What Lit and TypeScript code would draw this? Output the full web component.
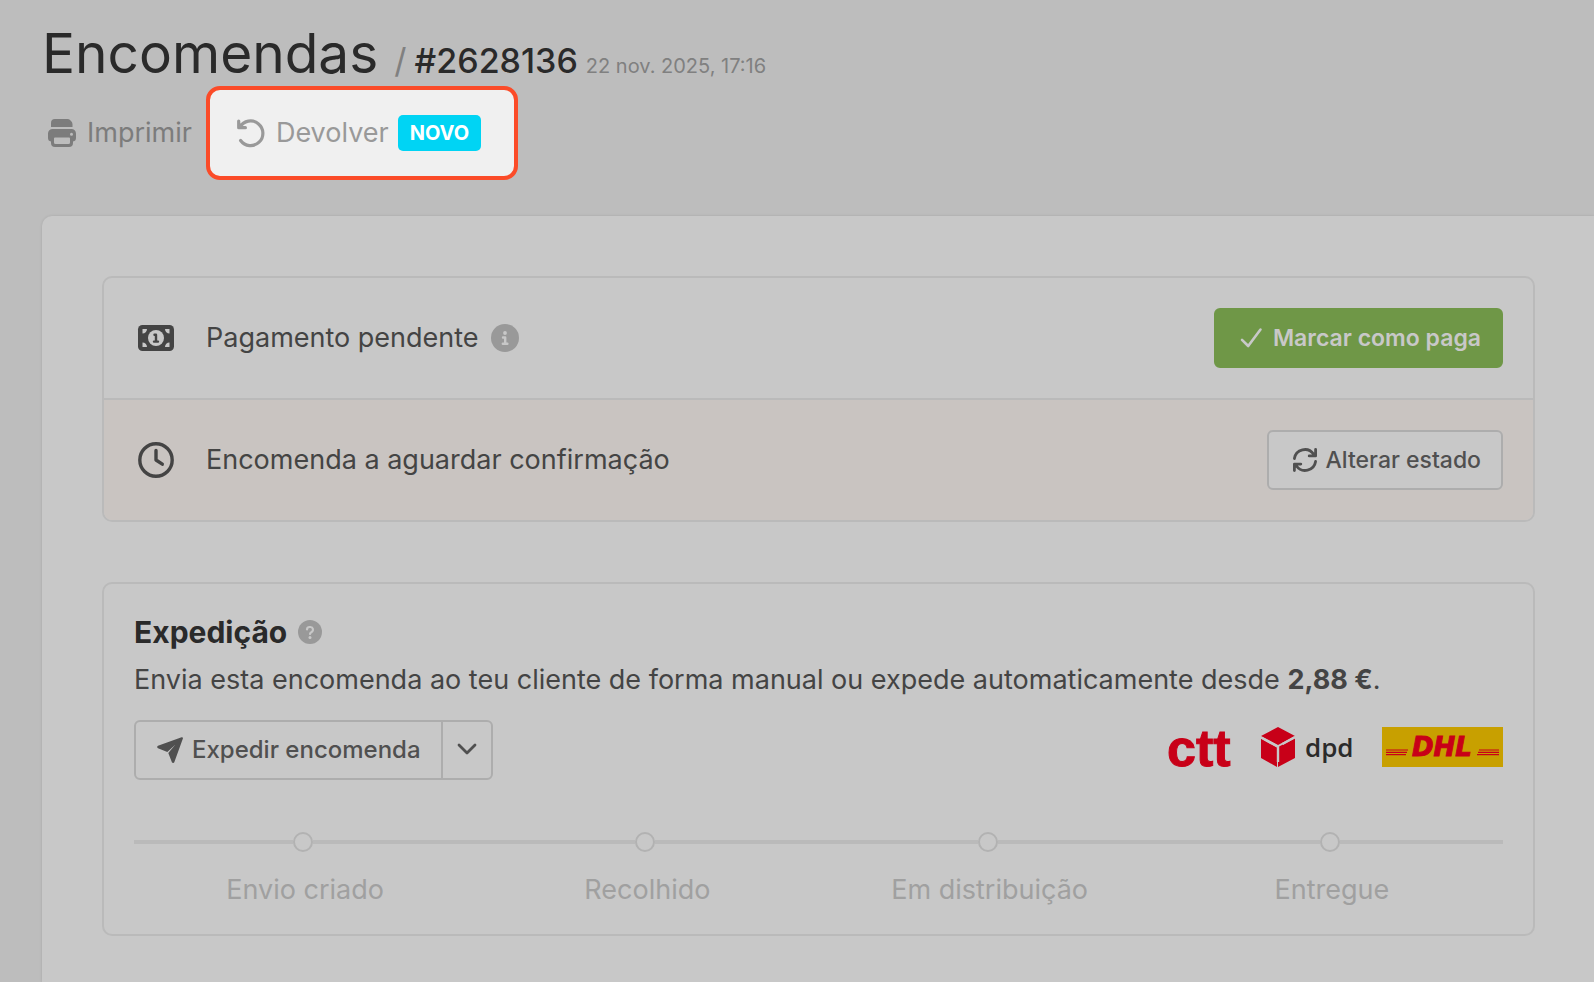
import { LitElement, html, css } from "lit";
import { customElement } from "lit/decorators.js";

const printer = html`<svg class="i28" viewBox="0 0 28 28" fill="currentColor" aria-hidden="true">
  <path d="M3 8V4a4 4 0 0 1 4-4h12.500a4 4 0 0 1 2.800 1.200l.700.800a5 5 0 0 1 1.500 3V8z"/>
  <path fill-rule="evenodd" d="M4.500 10h19A4.500 4.500 0 0 1 28 14.500V19a3.500 3.500 0 0 1-3 3.500V24a4 4 0 0 1-4 4H7a4 4 0 0 1-4-4v-1.500A3.500 3.500 0 0 1 0 19v-4.500A4.500 4.500 0 0 1 4.500 10zM6 19.500V23.500a1.500 1.500 0 0 0 1.500 1.500h13a1.500 1.500 0 0 0 1.500-1.500v-4a1 1 0 0 0-1-1H7a1 1 0 0 0-1 1zM23.500 13.800a1.500 1.500 0 1 0 0 3 1.500 1.500 0 0 0 0-3z"/>
</svg>`;

const undo = html`<svg class="i28" viewBox="0 0 28 28" fill="none" stroke="currentColor" stroke-width="3.200" stroke-linecap="round" stroke-linejoin="round" aria-hidden="true">
  <path d="M1.700 2v6.700h6.700M3 8A12.300 12.300 0 1 1 3.600 21.500"/><path d="M1.700 3.500v5.200h5.200z" fill="currentColor" stroke="none"/>
</svg>`;

const money = html`<svg class="i36" viewBox="0 0 36 36" aria-hidden="true">
  <rect x="0" y="5" width="36" height="26" rx="4.500" fill="currentColor"/>
  <g fill="#c8c8c8">
    <path d="M4.500 9h4.500a4.500 4.500 0 0 1-4.500 4.500zM31.500 9H27a4.500 4.500 0 0 0 4.500 4.500zM4.500 27h4.500a4.500 4.500 0 0 0-4.500-4.500zM31.500 27H27a4.500 4.500 0 0 1 4.500-4.500z"/>
    <circle cx="18" cy="18" r="8"/>
  </g>
  <path d="M16.500 14.800H18v6.600M16 21.600h4" fill="none" stroke="currentColor" stroke-width="2.400" stroke-linecap="round" stroke-linejoin="round"/>
</svg>`;

const clock = html`<svg class="i36" viewBox="0 0 36 36" fill="none" stroke="currentColor" stroke-width="3.400" stroke-linecap="round" stroke-linejoin="round" aria-hidden="true">
  <circle cx="18" cy="18" r="16.200"/><path d="M18 8.500V18l6.300 4.200"/>
</svg>`;

const info = html`<svg class="i28" viewBox="0 0 28 28" aria-hidden="true">
  <circle cx="14" cy="14" r="14" fill="#999"/>
  <circle cx="14" cy="9" r="1.900" fill="#c8c8c8"/>
  <path d="M12 13.500h2.200v6M11.800 19.700h4.600" fill="none" stroke="#c8c8c8" stroke-width="2.400" stroke-linecap="round" stroke-linejoin="round"/>
</svg>`;

const question = html`<svg class="i24" viewBox="0 0 24 24" aria-hidden="true">
  <circle cx="12" cy="12" r="12" fill="#999"/>
  <path d="M9 9.300a2.600 2.600 0 0 1 2.600-2.300h.800a2.700 2.700 0 0 1 1.300 5c-1 .600-1.700 1-1.700 2" fill="none" stroke="#c8c8c8" stroke-width="2.200" stroke-linecap="round"/>
  <circle cx="12" cy="17.400" r="1.500" fill="#c8c8c8"/>
</svg>`;

const check = html`<svg class="i24" viewBox="0 0 24 24" fill="none" stroke="currentColor" stroke-width="2.600" stroke-linecap="round" stroke-linejoin="round" aria-hidden="true">
  <path d="M2 13.800l6.200 6.200L20.500 3.500"/>
</svg>`;

const refresh = html`<svg class="i24" viewBox="0 0 24 24" fill="none" stroke="currentColor" stroke-width="2.800" stroke-linecap="round" stroke-linejoin="round" aria-hidden="true">
  <path d="M1.400 10.500A10.600 10.600 0 0 1 20.500 6l1.500 1.700M22.600 1.500v6.400h-6.400M22.600 13.500A10.600 10.600 0 0 1 3.500 18L2 16.300M1.400 22.500v-6.400h6.400"/>
</svg>`;

const send = html`<svg class="i26" viewBox="0 0 26 26" fill="currentColor" aria-hidden="true">
  <path d="M24.600.300 1 8.800a1.300 1.300 0 0 0 0 2.400l9.300 3.800L18.500 7.500 11.300 16l3.600 9.200a1.300 1.300 0 0 0 2.400 0L25.900 1.600a1 1 0 0 0-1.300-1.300z"/>
</svg>`;

const chevron = html`<svg class="i20" viewBox="0 0 20 20" fill="none" stroke="currentColor" stroke-width="2.800" stroke-linecap="round" stroke-linejoin="round" aria-hidden="true">
  <path d="M2 5l8 8 8-8"/>
</svg>`;

const ctt = html`<svg width="66" height="40" viewBox="0 0 66 40" role="img" aria-label="ctt">
  <text x="1" y="39" font-family="Liberation Sans, sans-serif" font-weight="700" font-size="52" fill="#c80018" stroke="#c80018">ctt</text>
</svg>`;

const dpd = html`<svg width="94" height="40" viewBox="0 0 94 40" role="img" aria-label="dpd">
  <path d="M18 0 35 9 18 18 1 9z M1 11.500 17 20.500V40L1 31z M35 11.500V31L18 40V20z" fill="#c80018"/>
  <path d="M1 10.500 18 19.800V35M22.500 17l12.500-7" fill="none" stroke="#c8c8c8" stroke-width="2.400"/>
  <text x="45" y="30" font-family="Open Sans, sans-serif" font-weight="600" font-size="26" fill="#2b2b2b">dpd</text>
</svg>`;

const dhl = html`<svg width="121" height="40" viewBox="0 0 121 40" role="img" aria-label="DHL">
  <path d="M0 0h121v40H0z" fill="#c8a000"/>
  <path d="M4 23h22M4 25.300h21M4 27.600h20M97 23h20M96 25.300h21M95 27.600h22" stroke="#c80018" stroke-width="1.200"/>
  <text x="60" y="29" text-anchor="middle" font-family="DejaVu Sans, sans-serif" font-weight="700" font-style="italic" font-size="26" fill="#c80018" stroke="#c80018">DHL</text>
</svg>`;

const steps = ["Envio criado", "Recolhido", "Em distribuição", "Entregue"];

@customElement("app-root")
export class AppRoot extends LitElement {
  static styles = css`
    :host {
      display: flex;
      flex-direction: column;
      min-height: 100vh;
      box-sizing: border-box;
      padding: 20px 0 0 42px;
      background: #bdbdbd;
      color: #444;
      font: 400 27px/42px Inter, sans-serif;
    }
    * { box-sizing: border-box; }
    svg { display: block; flex: none; overflow: visible; }
    .i20 { width: 20px; height: 20px; }
    .i24 { width: 24px; height: 24px; }
    .i26 { width: 26px; height: 26px; }
    .i28 { width: 28px; height: 28px; }
    .i36 { width: 36px; height: 36px; }
    h1, h2, p, ol { margin: 0; padding: 0; }
    header { display: flex; align-items: baseline; white-space: nowrap; line-height: 36px; color: #808080; }
    h1 { font-size: 55px; line-height: 66px; font-weight: 400; color: #2a2a2a; }
    .slash { margin: 0 8px 0 16px; font-size: 34px; }
    .number { font-size: 34px; font-weight: 500; color: #2a2a2a; }
    .date { margin-left: 8px; font-size: 20px; }
    .tools { display: flex; align-items: center; gap: 14px; }
    .tool { display: flex; align-items: center; gap: 11px; color: #7c7c7c; text-decoration: none; }
    .print { padding-left: 6px; }
    .focus {
      display: flex;
      border: 4px solid #fb4b28;
      border-radius: 14px;
      background: #f0f0f0;
      padding: 22px 33px 22px 27px;
    }
    .focus .tool { color: #999; }
    .badge {
      margin-left: -2px;
      padding: 0 12px;
      border-radius: 5px;
      background: #00d4f4;
      color: #fff;
      font-size: 20px;
      line-height: 36px;
      font-weight: 700;
    }
    main {
      flex: 1;
      display: flex;
      flex-direction: column;
      gap: 60px;
      margin-top: 36px;
      padding: 60px 59px 46px 60px;
      border-radius: 10px 0 0 0;
      background: #c8c8c8;
      box-shadow: 0 0 3px rgba(0, 0, 0, 0.12);
    }
    .card { border: 2px solid #bababa; border-radius: 10px; overflow: hidden; }
    .row { display: flex; align-items: center; padding: 30px 30px 30px 34px; }
    .row + .row { border-top: 2px solid #bababa; background: #c9c4c1; }
    .label { display: flex; align-items: center; gap: 12px; margin: 0 auto 0 32px; }
    button {
      display: flex;
      align-items: center;
      height: 60px;
      margin: 0;
      border: 2px solid #adadad;
      border-radius: 6px;
      background: #c8c8c8;
      color: #505050;
      font: 500 23px/36px Inter, sans-serif;
      gap: 9px;
      padding: 0 20px 0 24px;
    }
    .paid { border-color: #6f9747; background: #6f9747; color: #c8c8c8; font-weight: 600; }
    .ship { padding: 28px 30px 23px; }
    .ship h2 { display: flex; align-items: center; gap: 11px; font-size: 30px; line-height: 40px; font-weight: 700; color: #2a2a2a; }
    .ship p { margin-top: 7px; }
    .ship strong { font-weight: 700; }
    .actions { display: flex; align-items: center; justify-content: space-between; margin-top: 19px; }
    .split { display: flex; }
    .split button { font-size: 24px; }
    .split button:first-child { border-radius: 6px 0 0 6px; padding-left: 21px; }
    .split button:last-child { border-radius: 0 6px 6px 0; margin-left: -2px; padding: 0 14px; }
    .logos { display: flex; gap: 28px; margin-bottom: 6px; }
    .steps { display: flex; list-style: none; margin-top: 52px; color: #a0a0a0; text-align: center; }
    .steps li { flex: 1; }
    .track { display: flex; align-items: center; height: 20px; margin-bottom: 17px; }
    .track::before, .track::after { content: ""; flex: 1 1 0; height: 4px; background: #bababa; }
    .track::after { flex-basis: 4px; }
    .dot { width: 20px; height: 20px; border: 2px solid #b2b2b2; border-radius: 50%; }
  `;

  render() {
    return html`
      <header>
        <h1>Encomendas</h1>
        <span class="slash">/</span>
        <span class="number">#2628136</span>
        <time class="date" datetime="2025-11-22T17:16">22 nov. 2025, 17:16</time>
      </header>
      <nav class="tools">
        <a class="tool print" href="#imprimir">${printer}<span>Imprimir</span></a>
        <div class="focus">
          <a class="tool" href="#devolver">${undo}<span>Devolver</span><span class="badge">NOVO</span></a>
        </div>
      </nav>
      <main>
        <section class="card">
          <div class="row">
            ${money}<span class="label">Pagamento pendente ${info}</span>
            <button class="paid" type="button">${check}<span>Marcar como paga</span></button>
          </div>
          <div class="row">
            ${clock}<span class="label">Encomenda a aguardar confirmação</span>
            <button type="button">${refresh}<span>Alterar estado</span></button>
          </div>
        </section>
        <section class="card ship">
          <h2>Expedição ${question}</h2>
          <p>Envia esta encomenda ao teu cliente de forma manual ou expede automaticamente desde <strong>2,88 €</strong>.</p>
          <div class="actions">
            <div class="split">
              <button type="button">${send}<span>Expedir encomenda</span></button>
              <button type="button" aria-label="Mais opções">${chevron}</button>
            </div>
            <div class="logos">${ctt}${dpd}${dhl}</div>
          </div>
          <ol class="steps">
            ${steps.map((s) => html`<li><div class="track"><span class="dot"></span></div>${s}</li>`)}
          </ol>
        </section>
      </main>
    `;
  }
}
